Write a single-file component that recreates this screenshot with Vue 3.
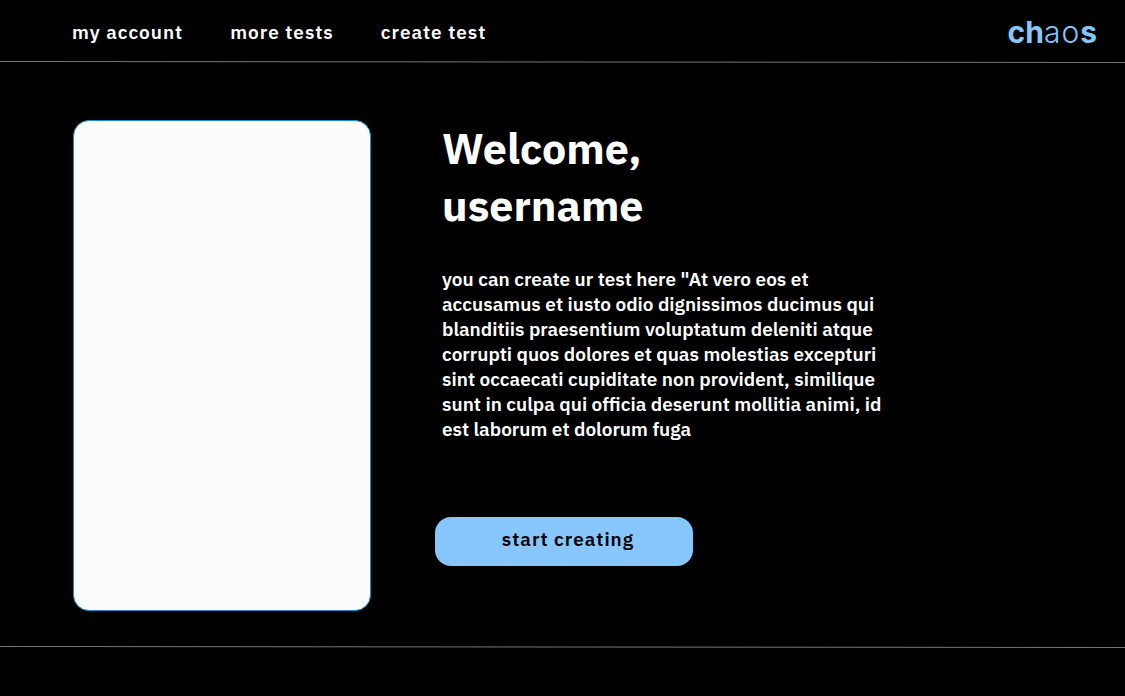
<script setup>
const links = ['my account', 'more tests', 'create test']
const intro = [
  'you can create ur test here "At vero eos et',
  'accusamus et iusto odio dignissimos ducimus qui',
  'blanditiis praesentium voluptatum deleniti atque',
  'corrupti quos dolores et quas molestias excepturi',
  'sint occaecati cupiditate non provident, similique',
  'sunt in culpa qui officia deserunt mollitia animi, id',
  'est laborum et dolorum fuga',
]
</script>

<template>
  <div class="page">
    <header class="top">
      <nav class="nav">
        <a v-for="link in links" :key="link" href="#">{{ link }}</a>
      </nav>
      <a class="logo" href="#"><b>ch</b><span>ao</span><b>s</b></a>
    </header>
    <svg class="rule" aria-hidden="true"><line x1="0" y1="1.5" x2="100%" y2="2.5" /></svg>

    <main class="main">
      <div class="card"></div>
      <section class="content">
        <h1>Welcome,<br />username</h1>
        <p><template v-for="(line, i) in intro" :key="i">{{ line }}<br v-if="i < intro.length - 1" /></template></p>
        <button class="start" type="button">start creating</button>
      </section>
    </main>
    <svg class="rule" aria-hidden="true"><line x1="0" y1="1.5" x2="100%" y2="2.5" /></svg>
  </div>
</template>

<style>
html,
body {
  background: #000;
}
</style>

<style scoped>
.page {
  min-height: 100vh;
  box-sizing: border-box;
  background: #000;
  color: #fff;
  font-family: "IBM Plex Sans", "Noto Sans", sans-serif;
}

.top {
  display: flex;
  align-items: center;
  justify-content: space-between;
  padding: 12px 28px 8px 72px;
}

.nav {
  display: flex;
  gap: 47px;
}

.nav a {
  color: #fff;
  font-size: 19px;
  font-weight: 600;
  line-height: 24px;
  letter-spacing: 1px;
  text-decoration: none;
}

.logo {
  color: #87c6ff;
  font-family: Inter, sans-serif;
  font-size: 30px;
  font-weight: 300;
  line-height: 40px;
  text-decoration: none;
}

.logo span {
  letter-spacing: 1px;
}

.logo b {
  font-weight: 700;
}

.rule {
  display: block;
  width: 100%;
  height: 3px;
}

.rule line {
  stroke: #777;
  stroke-width: 1;
}

.main {
  display: flex;
  gap: 71px;
  padding: 57px 73px 34px;
}

.card {
  flex: 0 0 298px;
  height: 491px;
  box-sizing: border-box;
  border: 1px solid #168ec2;
  border-radius: 16px;
  background: #fcfcfc;
}

.content {
  flex: 1;
}

h1 {
  margin: 0;
  font-size: 43px;
  font-weight: 700;
  line-height: 57px;
}

p {
  margin: 33px 0 0;
  font-size: 19px;
  font-weight: 600;
  line-height: 25px;
  white-space: nowrap;
}

.start {
  display: block;
  width: 258px;
  height: 49px;
  margin: 75px 0 0 -7px;
  padding: 0 0 6px 8px;
  border: 0;
  border-radius: 16px;
  background: #87c6ff;
  color: #000;
  font: 600 19px/24px "IBM Plex Sans", "Noto Sans", sans-serif;
  letter-spacing: 1px;
  cursor: pointer;
}
</style>
